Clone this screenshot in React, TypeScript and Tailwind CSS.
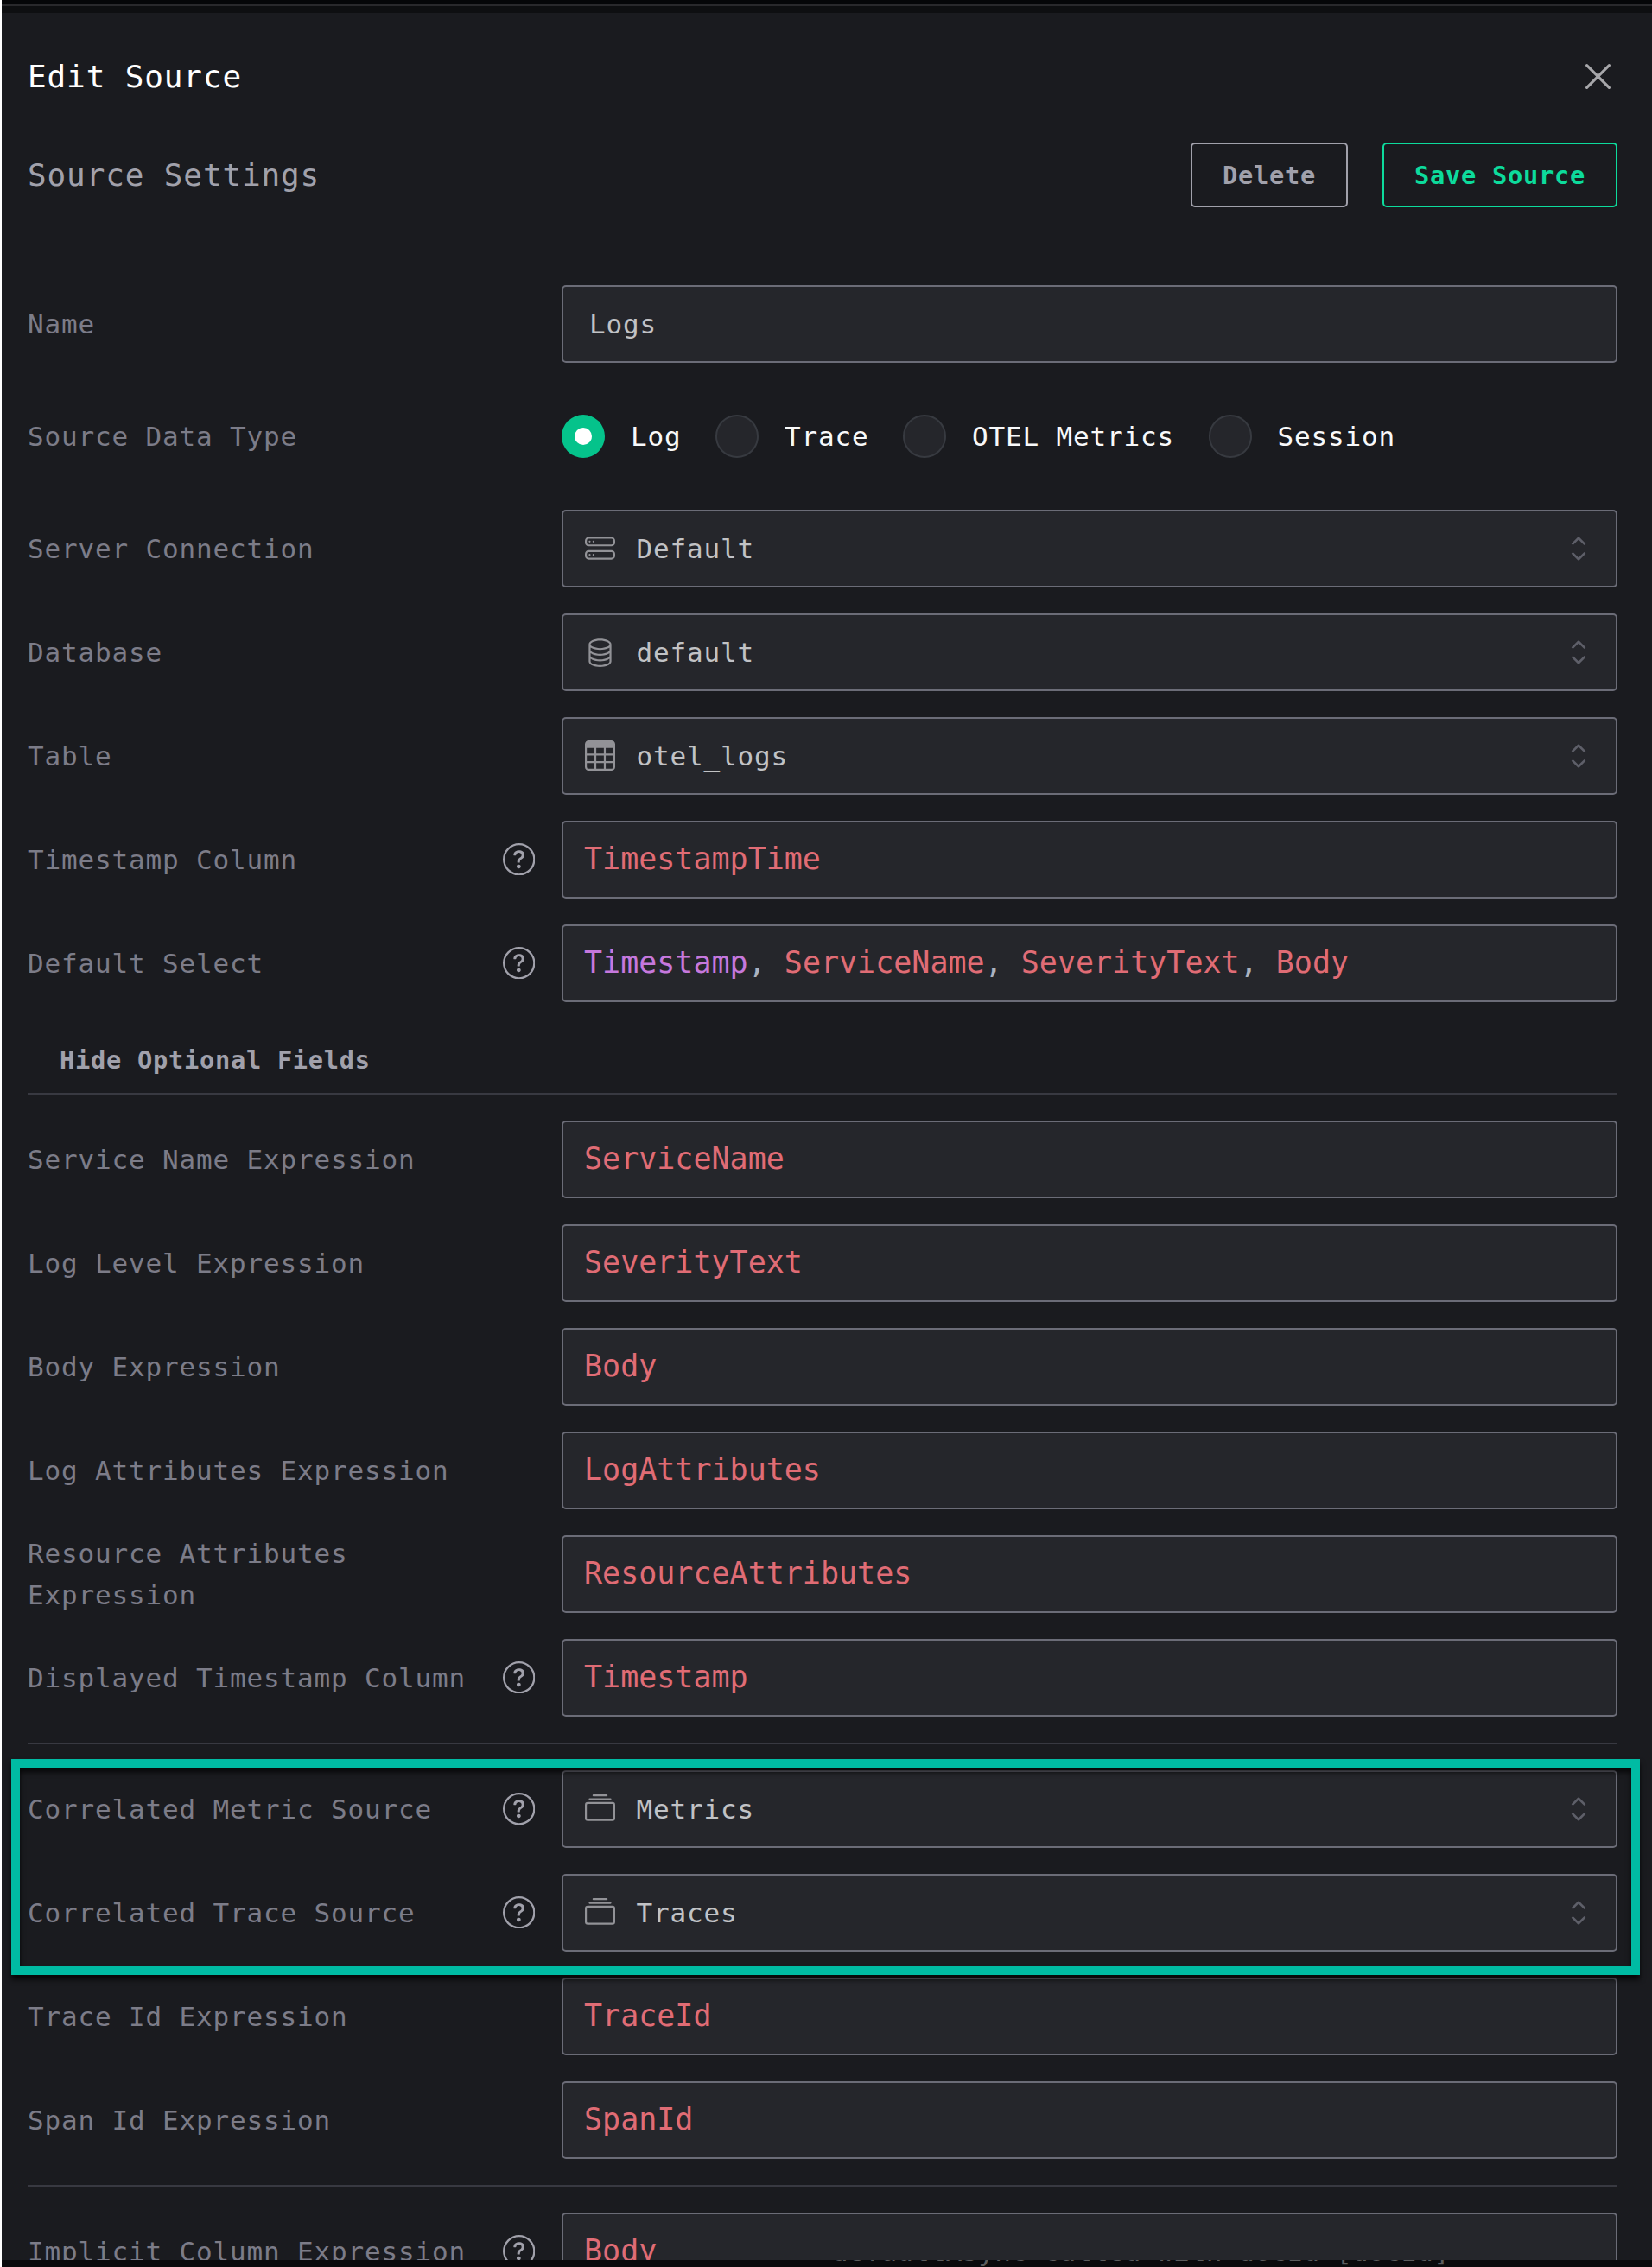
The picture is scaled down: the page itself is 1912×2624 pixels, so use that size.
import React from "react";
import {
  BsCollection,
  BsDatabase,
  BsHddStack,
  BsQuestionCircle,
  BsTable,
} from "react-icons/bs";

const MONO = "font-['DejaVu_Sans_Mono','Liberation_Mono',monospace]";
const BODY = "text-[31px] tracking-[0.84px] leading-[48px]";
const BOX =
  "flex h-[90px] w-[1222px] shrink-0 items-center rounded-[5px] border-2 border-[#6b6c77] bg-[#25262b]";

function Label({ text, help }: { text: string; help?: boolean }) {
  return (
    <div className="flex h-[90px] w-[618px] shrink-0 items-center justify-between pr-[31px]">
      <span className={`${BODY} max-w-[520px] text-[#7c7c88]`}>{text}</span>
      {help && <BsQuestionCircle className="-mt-px size-[37.5px] shrink-0 text-[#a1a1ab]" />}
    </div>
  );
}

function Row({
  label,
  help,
  children,
}: {
  label: string;
  help?: boolean;
  children: React.ReactNode;
}) {
  return (
    <div className="flex items-center">
      <Label text={label} help={help} />
      {children}
    </div>
  );
}

function Chevrons() {
  return (
    <svg
      className="size-[38px] text-[#5e5f69]"
      viewBox="0 0 38 38"
      fill="none"
      stroke="currentColor"
      strokeWidth="2.6"
      strokeLinejoin="round"
    >
      <path d="M11.6 14.1 19 6.8l7.4 7.3M11.6 23.9l7.4 7.3 7.4-7.3" />
    </svg>
  );
}

function SelectBox({ icon, value }: { icon: React.ReactNode; value: string }) {
  return (
    <div className={`${BOX} justify-between pr-[24px] pl-[25px]`}>
      <div className="flex items-center gap-[24.5px]">
        <span className="-mt-px text-[35px] text-[#929297]">{icon}</span>
        <span className={`${BODY} text-[#c1c2c5]`}>{value}</span>
      </div>
      <Chevrons />
    </div>
  );
}

function Editor({ children }: { children: React.ReactNode }) {
  return (
    <div className={`${BOX} px-6 text-[35px] leading-[48px] text-[#e06c75]`}>
      <span className="-mt-[2px] whitespace-pre">{children}</span>
    </div>
  );
}

function Radio({ label, checked }: { label: string; checked?: boolean }) {
  return (
    <div className="flex items-center gap-[30px]">
      {checked ? (
        <span className="flex size-[50px] items-center justify-center rounded-full bg-[#05c38b]">
          <span className="size-5 rounded-full bg-white" />
        </span>
      ) : (
        <span className="size-[50px] rounded-full border-2 border-[#373a40] bg-[#25262b]" />
      )}
      <span className={`${BODY} text-[#f8f9fa]`}>{label}</span>
    </div>
  );
}

const Divider = () => <div className="h-[2px] bg-[#383941]" />;
const Comma = () => <span className="text-[#abb2bf]">, </span>;

export default function App() {
  return (
    <div className={`${MONO} flex h-[2624px] w-[1912px] flex-col overflow-hidden bg-[#1a1b1f]`}>
      <div className="flex h-[2624px] flex-col overflow-hidden border-l-2 border-white">
        <div className="h-[5px] shrink-0 bg-[#050608]" />
        <div className="h-[2px] shrink-0 bg-[#29292c]" />
        <div className="h-2 shrink-0 bg-[#0e0f11]" />

        <div className="h-[2601px] shrink-0 overflow-hidden pr-10 pl-[30px]">
          <header className="flex h-[147px] items-center justify-between pr-[7px]">
            <h1 className="text-[36px] leading-[50px] tracking-[0.87px] text-white">Edit Source</h1>
            <svg
              className="size-[31px]"
              viewBox="0 0 31 31"
              fill="none"
              stroke="#a7a7aa"
              strokeWidth="3.2"
              strokeLinecap="round"
            >
              <path d="m2.6 2.6 25.8 25.8M28.4 2.6 2.6 28.4" />
            </svg>
          </header>

          <div className="mb-[88px] flex h-[80px] items-center justify-between pt-px">
            <h2 className="pt-px text-[36px] leading-[50px] tracking-[0.87px] text-[#a1a1ab]">
              Source Settings
            </h2>
            <div className="flex gap-10 text-[28.7px] font-bold tracking-[0.72px]">
              <button className="flex h-[75px] w-[182px] items-center justify-center rounded-[5px] border-2 border-[#a1a1ab] pt-[2px] text-[#a1a1ab]">
                Delete
              </button>
              <button className="flex h-[75px] w-[272px] items-center justify-center rounded-[5px] border-2 border-[#0ddb9c] pt-[2px] text-[#0ddb9c]">
                Save Source
              </button>
            </div>
          </div>

          <Row label="Name">
            <div className={`${BOX} ${BODY} px-[30px] text-[#c1c2c5]`}>Logs</div>
          </Row>
          <div className="my-10">
            <Row label="Source Data Type">
              <div className="flex items-center gap-[39.5px]">
                <Radio label="Log" checked />
                <Radio label="Trace" />
                <Radio label="OTEL Metrics" />
                <Radio label="Session" />
              </div>
            </Row>
          </div>
          <div className="flex flex-col gap-[30px]">
            <Row label="Server Connection">
              <SelectBox icon={<BsHddStack />} value="Default" />
            </Row>
            <Row label="Database">
              <SelectBox icon={<BsDatabase />} value="default" />
            </Row>
            <Row label="Table">
              <SelectBox icon={<BsTable />} value="otel_logs" />
            </Row>
            <Row label="Timestamp Column" help>
              <Editor>TimestampTime</Editor>
            </Row>
            <Row label="Default Select" help>
              <Editor>
                <span className="text-[#c678dd]">Timestamp</span>
                <Comma />
                ServiceName
                <Comma />
                SeverityText
                <Comma />
                Body
              </Editor>
            </Row>
          </div>

          <div className="flex h-[105px] items-center pt-[31px] pl-[37px] text-[28.7px] font-bold tracking-[0.72px] text-[#a1a1ab]">
            Hide Optional Fields
          </div>

          <div className="flex flex-col gap-[30px]">
            <Divider />
            <Row label="Service Name Expression">
              <Editor>ServiceName</Editor>
            </Row>
            <Row label="Log Level Expression">
              <Editor>SeverityText</Editor>
            </Row>
            <Row label="Body Expression">
              <Editor>Body</Editor>
            </Row>
            <Row label="Log Attributes Expression">
              <Editor>LogAttributes</Editor>
            </Row>
            <Row label="Resource Attributes Expression">
              <Editor>ResourceAttributes</Editor>
            </Row>
            <Row label="Displayed Timestamp Column" help>
              <Editor>Timestamp</Editor>
            </Row>
            <Divider />
            <div className="relative flex flex-col gap-[30px]">
              <Row label="Correlated Metric Source" help>
                <SelectBox icon={<BsCollection />} value="Metrics" />
              </Row>
              <Row label="Correlated Trace Source" help>
                <SelectBox icon={<BsCollection />} value="Traces" />
              </Row>
              <div className="pointer-events-none absolute -top-[13px] -right-[26px] -bottom-[27px] -left-[19px] z-10 border-10 border-[#00bba3] [filter:drop-shadow(0_5px_3px_rgba(0,0,0,0.8))]" />
            </div>
            <Row label="Trace Id Expression">
              <Editor>TraceId</Editor>
            </Row>
            <Row label="Span Id Expression">
              <Editor>SpanId</Editor>
            </Row>
            <Divider />
            <Row label="Implicit Column Expression" help>
              <Editor>Body</Editor>
            </Row>
          </div>
        </div>

        <div className="flex h-2 shrink-0 items-end overflow-hidden bg-[#0a0b0d] pl-[961px]">
          <span className="text-[31px] leading-[36px] tracking-[0.15px] whitespace-pre text-[#5c5d5e]">
            defaultAsync called with docId [docId]
          </span>
        </div>
      </div>
    </div>
  );
}
